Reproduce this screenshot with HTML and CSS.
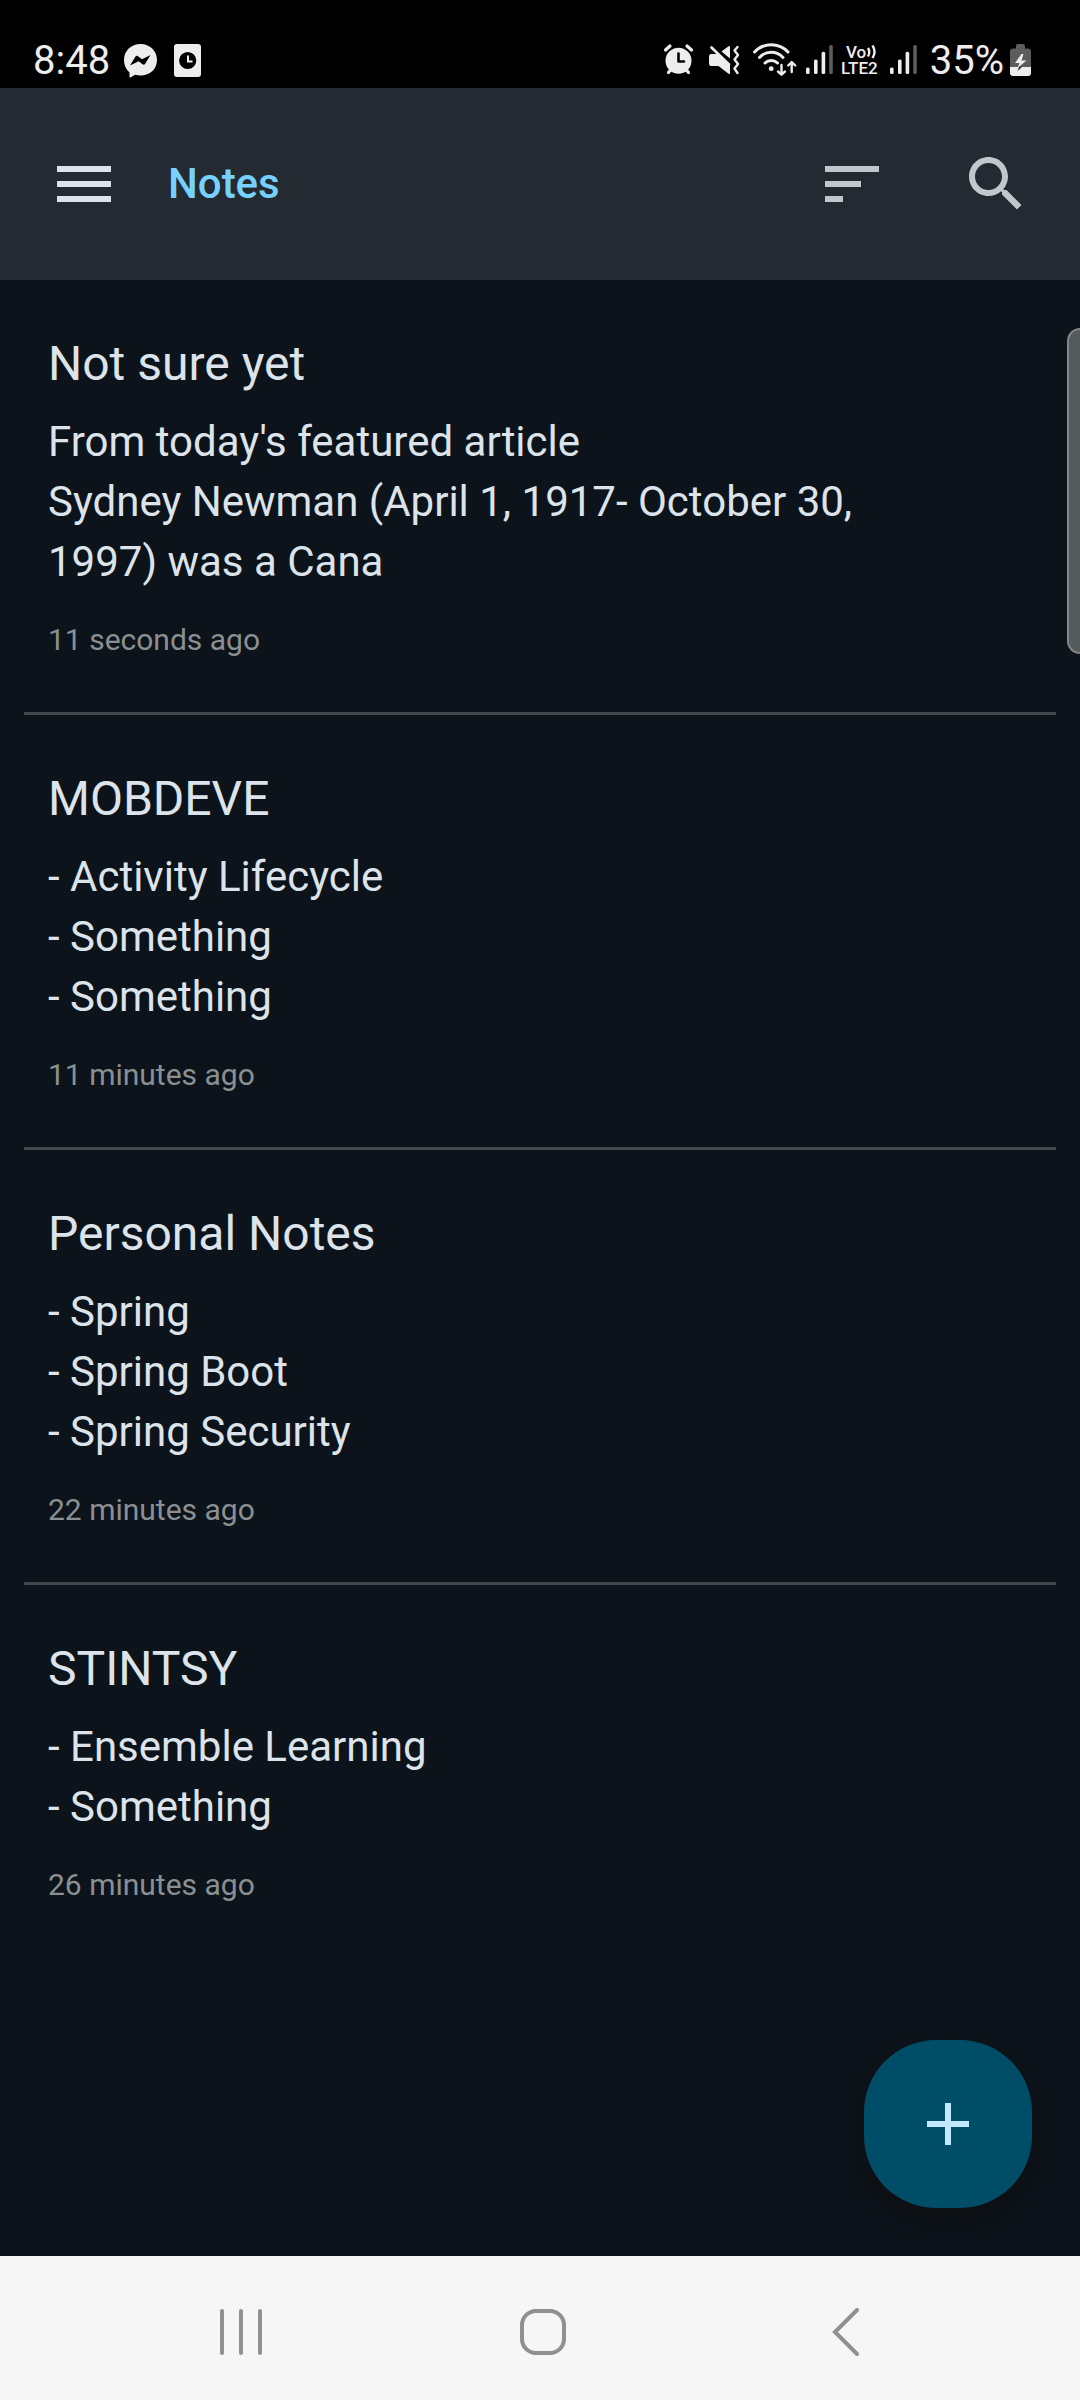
FILE: index.html
```html
<!DOCTYPE html>
<html lang="en">
<head>
<meta charset="utf-8">
<meta name="viewport" content="width=device-width, initial-scale=1">
<title>Notes</title>
<link rel="stylesheet" href="styles.css">
</head>
<body>
<div class="status-bar">
  <div class="status-left">
    <span class="status-text">8:48</span>
    <svg width="40" height="36" viewBox="0 0 40 36" role="img" aria-label="Messenger">
      <path fill="#ededed" d="M18.5 2C28 2 35 8.800 35 18S28 33.500 18.500 33.500Q15.500 33.500 13 32.800L8.500 35.500Q7.500 35.700 7.500 34.500V30.500C4 27.500 2 23 2 18C2 8.800 9 2 18.500 2Z"/>
      <path fill="#000" d="M8 23.500L13.500 14.500Q14.500 13.300 16 14.200L20 17.300L28.500 13L23 22Q22 23.300 20.500 22.300L16.700 19.300Z"/>
    </svg>
    <svg width="28" height="36" viewBox="0 0 28 36" role="img" aria-label="Scheduled">
      <rect x="0" y="2" width="27" height="33" rx="3" fill="#ededed"/>
      <circle cx="13.700" cy="18.500" r="8.600" fill="#000"/>
      <path d="M14 13.500V19.500H18.500" fill="none" stroke="#ededed" stroke-width="2"/>
    </svg>
  </div>
  <div class="status-right">
    <svg width="40" height="36" viewBox="0 0 40 36" role="img" aria-label="Alarm">
      <circle cx="16.500" cy="18.700" r="13" fill="#ededed"/>
      <path d="M3.500 8L8 4M25 4L29.500 8M6.500 30.500L9 27.500M26.500 30.500L24 27.500" fill="none" stroke="#ededed" stroke-width="3.200" stroke-linecap="round"/>
      <path d="M16.500 11.500V19.500H22" fill="none" stroke="#000" stroke-width="2.600" stroke-linecap="round" stroke-linejoin="round"/>
    </svg>
    <svg width="40" height="36" viewBox="0 0 40 36" role="img" aria-label="Vibrate">
      <path fill="#ededed" d="M5 12H12.500L24 22.500V31Q24 32.500 22.500 31.700L12.500 24H5Q3 24 3 21.500V14.500Q3 12 5 12Z"/>
      <path fill="#ededed" d="M15.500 9.500L22.500 4.300Q24 3.500 24 5V16.500Z"/>
      <path d="M5.500 5.500L23 22.500" stroke="#ededed" stroke-width="2.600" stroke-linecap="round"/>
      <path d="M31.500 5L28.500 8.500L32 13L28.500 17.500L32 22L28.500 26.500L31.500 31" fill="none" stroke="#ededed" stroke-width="2.400" stroke-linecap="round" stroke-linejoin="round"/>
    </svg>
    <svg width="50" height="36" viewBox="0 0 50 36" role="img" aria-label="Wi-Fi">
      <g fill="none" stroke="#ededed" stroke-width="3" stroke-linecap="round" stroke-linejoin="round">
        <path d="M4.500 10A23 23 0 0 1 38 10M9.500 15.500A16 16 0 0 1 33 15.500M15 21A9 9 0 0 1 27.500 21"/>
        <path stroke-width="2.400" d="M31.500 23V32.500M28 29.500L31.500 32.700L35 29.500M41.700 30V20.500M38.200 23.500L41.700 20L45.200 23.500"/>
      </g>
      <circle cx="21.200" cy="26.700" r="2.400" fill="#ededed"/>
    </svg>
    <svg width="32" height="36" viewBox="0 0 32 36" role="img" aria-label="Signal, SIM 1">
      <g fill="#ededed">
        <rect x="2" y="25.500" width="3.600" height="6.500" rx="1.500"/>
        <rect x="10" y="17.500" width="3.600" height="14.500" rx="1.500"/>
        <rect x="17.600" y="9.700" width="3.600" height="22.300" rx="1.500"/>
        <rect x="25.200" y="3" width="3.600" height="29" rx="1.500" fill="#5c5c5c"/>
      </g>
    </svg>
    <svg class="volte" width="46" height="36" viewBox="0 0 46 36">
      <text x="6" y="16">Vo</text>
      <path d="M28 6Q30.500 10 28 14.500M32.500 3.500Q36.500 9.500 32.500 16" fill="none" stroke="#ededed" stroke-width="2.400"/>
      <text x="1" y="32">LTE2</text>
    </svg>
    <svg width="36" height="36" viewBox="4 0 36 36" role="img" aria-label="Signal, SIM 2">
      <g fill="#ededed">
        <rect x="4" y="25.500" width="3.600" height="6.500" rx="1.500"/>
        <rect x="12" y="17.500" width="3.600" height="14.500" rx="1.500"/>
        <rect x="19.600" y="9.700" width="3.600" height="22.300" rx="1.500"/>
        <rect x="27.200" y="3" width="3.600" height="29" rx="1.500" fill="#5c5c5c"/>
      </g>
    </svg>
    <span class="status-text">35%</span>
    <svg width="24" height="36" viewBox="0 0 24 36" role="img" aria-label="Charging">
      <path fill="#5c5c5c" d="M8 6.500V4Q8 2 10 2H15Q17 2 17 4V6.500H20Q23 6.500 23 9.500V25H2V9.500Q2 6.500 5 6.500Z"/>
      <path fill="#ededed" d="M2 25H23V31Q23 34 20 34H5Q2 34 2 31Z"/>
      <path fill="#ededed" d="M13.500 12L7 21H11.500L9.500 26L18.500 18.500H13.500L15.500 12Z"/>
      <path fill="#222" d="M11 25H14L9.500 29Z"/>
    </svg>
  </div>
</div>

<header class="app-bar">
  <button class="icon-button menu-button" type="button" aria-label="Menu">
    <svg width="72" height="72" viewBox="0 0 24 24"><path fill="currentColor" d="M3 18h18v-2H3v2zm0-5h18v-2H3v2zm0-7v2h18V6H3z"/></svg>
  </button>
  <h1 class="app-title">Notes</h1>
  <button class="icon-button" type="button" aria-label="Sort">
    <svg width="72" height="72" viewBox="0 0 24 24"><path fill="currentColor" d="M3 18h6v-2H3v2zM3 6v2h18V6H3zm0 7h12v-2H3v2z"/></svg>
  </button>
  <button class="icon-button" type="button" aria-label="Search">
    <svg width="72" height="72" viewBox="0 0 24 24"><path fill="currentColor" d="M15.500 14h-.79l-.28-.27C15.410 12.590 16 11.110 16 9.500 16 5.910 13.090 3 9.500 3S3 5.910 3 9.500 5.910 16 9.500 16c1.610 0 3.090-.59 4.230-1.570l.27.28v.79l5 4.990L20.490 19l-4.990-5zm-6 0C7.010 14 5 11.990 5 9.500S7.010 5 9.500 5 14 7.010 14 9.500 11.990 14 9.500 14z"/></svg>
  </button>
</header>

<main class="content">
  <ul class="notes">
    <li class="note">
      <h2 class="note-title">Not sure yet</h2>
      <p class="note-body">From today's featured article
Sydney Newman (April 1, 1917- October 30,
1997) was a Cana</p>
      <p class="note-time">11 seconds ago</p>
    </li>
    <li class="note">
      <h2 class="note-title">MOBDEVE</h2>
      <p class="note-body">- Activity Lifecycle
- Something
- Something</p>
      <p class="note-time">11 minutes ago</p>
    </li>
    <li class="note">
      <h2 class="note-title">Personal Notes</h2>
      <p class="note-body">- Spring
- Spring Boot
- Spring Security</p>
      <p class="note-time">22 minutes ago</p>
    </li>
    <li class="note">
      <h2 class="note-title">STINTSY</h2>
      <p class="note-body">- Ensemble Learning
- Something</p>
      <p class="note-time">26 minutes ago</p>
    </li>
  </ul>
  <div class="edge-handle"></div>
  <button class="fab" type="button" aria-label="Add note">
    <svg width="72" height="72" viewBox="0 0 24 24"><path fill="currentColor" d="M19 13h-6v6h-2v-6H5v-2h6V5h2v6h6v2z"/></svg>
  </button>
</main>

<nav class="system-nav" aria-label="System">
  <button class="nav-button" type="button" aria-label="Recent apps">
    <svg width="48" height="48" viewBox="0 0 48 48"><path d="M5 3V45M24 3V45M43 3V45"/></svg>
  </button>
  <button class="nav-button" type="button" aria-label="Home">
    <svg width="48" height="48" viewBox="0 0 48 48"><rect x="3" y="3" width="42" height="42" rx="14"/></svg>
  </button>
  <button class="nav-button" type="button" aria-label="Back">
    <svg width="48" height="48" viewBox="0 0 48 48"><path d="M36 2L14 24L36 46"/></svg>
  </button>
</nav>
</body>
</html>
```

FILE: styles.css
```css
* {
  box-sizing: border-box;
}

body {
  margin: 0;
  min-height: 100vh;
  display: flex;
  flex-direction: column;
  background: #0c131a;
  color: #dde3ea;
  font-family: Roboto, "Liberation Sans", sans-serif;
}

h1, h2, p, ul {
  margin: 0;
  padding: 0;
}

button {
  margin: 0;
  padding: 0;
  border: 0;
  background: none;
  color: inherit;
  font: inherit;
  cursor: pointer;
}

svg {
  display: block;
  flex: none;
}

.status-bar {
  display: flex;
  justify-content: space-between;
  padding: 32px 48px 0 33px;
  background: #000;
}

.status-left,
.status-right {
  display: flex;
  align-items: center;
  height: 56px;
}

.status-left {
  gap: 12px;
}

.status-right {
  gap: 4px;
}

.status-text {
  padding-top: 2px;
  color: #ededed;
  font-size: 40px;
  line-height: 54px;
}

.volte {
  overflow: visible;
  fill: #ededed;
  font-size: 17px;
  font-weight: 500;
}

.app-bar {
  display: flex;
  align-items: center;
  height: 192px;
  padding: 0 12px;
  background: #232a31;
}

.icon-button {
  display: flex;
  align-items: center;
  justify-content: center;
  width: 144px;
  height: 144px;
  color: #c0c7cd;
}

.menu-button {
  color: #dde3ea;
}

.app-title {
  flex: 1;
  padding-left: 12px;
  color: #76d1ff;
  font-size: 42px;
  font-weight: 500;
  line-height: 60px;
}

.content {
  position: relative;
  flex: 1;
}

.notes {
  list-style: none;
  padding: 0 24px;
}

.note {
  padding: 48px 24px;
}

.note + .note {
  border-top: 3px solid #40484d;
}

.note-title {
  font-size: 48px;
  font-weight: 400;
  line-height: 72px;
}

.note-body {
  margin-top: 12px;
  font-size: 42px;
  line-height: 60px;
  white-space: pre-line;
}

.note-time {
  margin-top: 24px;
  color: #8b8f92;
  font-size: 30px;
  line-height: 48px;
}

.edge-handle {
  position: absolute;
  top: 48px;
  right: 0;
  width: 13px;
  height: 326px;
  border: 2px solid #858688;
  border-right: 0;
  border-radius: 14px 0 0 14px;
  background: #54595c;
}

.fab {
  position: absolute;
  right: 48px;
  bottom: 48px;
  display: flex;
  align-items: center;
  justify-content: center;
  width: 168px;
  height: 168px;
  border-radius: 72px;
  background: #004d67;
  color: #c2e8ff;
  box-shadow: 0 12px 24px #0d1012;
}

.system-nav {
  display: flex;
  align-items: center;
  height: 144px;
  padding: 8px 84px 0 90px;
  background: #f6f6f6;
}

.nav-button {
  flex: 1;
  display: flex;
  justify-content: center;
}

.nav-button svg {
  fill: none;
  stroke: #909090;
  stroke-width: 4;
  stroke-linecap: round;
}
```
